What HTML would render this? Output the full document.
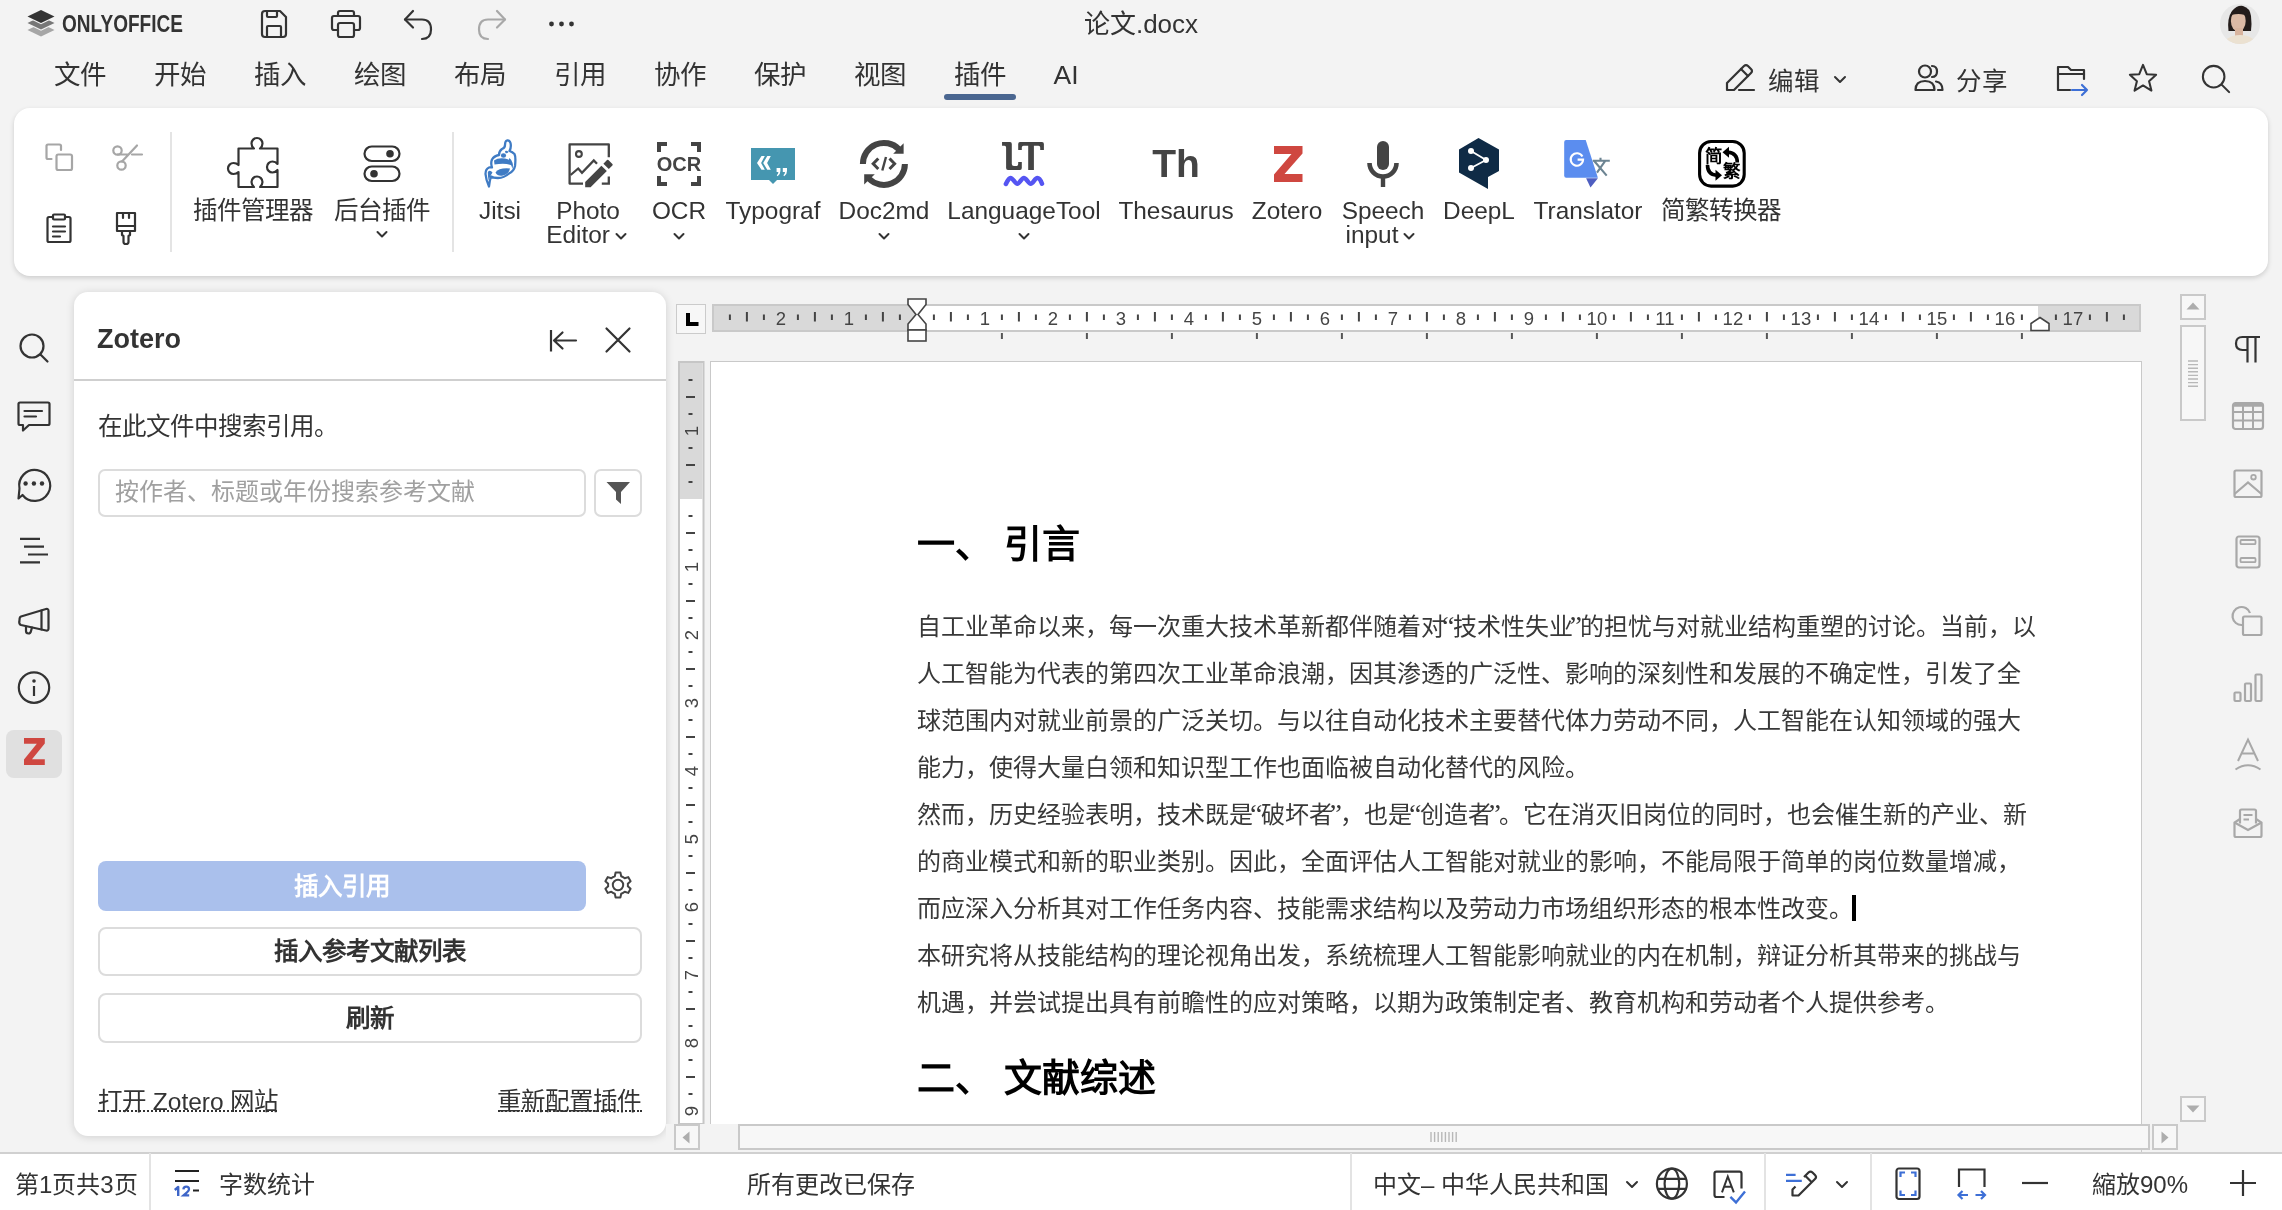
<!DOCTYPE html>
<html lang="zh-CN"><head><meta charset="utf-8">
<style>
*{box-sizing:border-box;margin:0;padding:0}
html,body{width:2282px;height:1210px;overflow:hidden}
body{position:relative;will-change:transform;background:#f3f3f3;font-family:"Liberation Sans",sans-serif;color:#333}
.a{position:absolute;white-space:nowrap}
svg{position:absolute;overflow:visible}
.st{fill:none;stroke:#333;stroke-width:2.2;stroke-linecap:round;stroke-linejoin:round}
.tab{position:absolute;top:56px;font-size:26.5px;color:#333;line-height:38px;white-space:nowrap;width:100px;text-align:center}
.lbl{position:absolute;font-size:24.4px;color:#333;line-height:24px;white-space:nowrap;text-align:center;width:200px}
.lblc{font-size:24.5px}
.chev{fill:none;stroke:#333;stroke-width:2;stroke-linecap:round;stroke-linejoin:round}
.sep{position:absolute;width:2px;background:#e4e4e4}
</style></head><body>

<!-- ============ TITLE BAR ============ -->
<svg style="left:26px;top:9px" width="30" height="29" viewBox="0 0 30 29">
  <path d="M1.5 21 L15 14.5 L28.5 21 L15 27.5 Z" fill="#a6a6a6"/>
  <path d="M1.5 14 L15 7.5 L28.5 14 L15 20.5 Z" fill="#f3f3f3" transform="translate(0,1.2)"/>
  <path d="M1.5 14 L15 7.5 L28.5 14 L15 20.5 Z" fill="#777"/>
  <path d="M1.5 7.5 L15 1 L28.5 7.5 L15 14 Z" fill="#f3f3f3" transform="translate(0,1.2)"/>
  <path d="M1.5 7.5 L15 1 L28.5 7.5 L15 14 Z" fill="#333"/>
</svg>
<div class="a" style="left:62px;top:11px;font-size:23.5px;font-weight:bold;color:#333;line-height:26px;transform:scaleX(0.81);transform-origin:0 0">ONLYOFFICE</div>

<!-- save -->
<svg style="left:259px;top:9px" width="30" height="30" viewBox="0 0 30 30">
  <path class="st" d="M3 5 Q3 2 6 2 L21 2 L27 8 L27 25 Q27 28 24 28 L6 28 Q3 28 3 25 Z"/>
  <path class="st" d="M8 2 L8 7 Q8 8 9 8 L17 8 Q18 8 18 7 L18 2"/>
  <path class="st" d="M8 28 L8 18 Q8 17 9 17 L21 17 Q22 17 22 18 L22 28"/>
</svg>
<!-- print -->
<svg style="left:330px;top:9px" width="32" height="30" viewBox="0 0 32 30">
  <path class="st" d="M8 7 L8 4 Q8 2 10 2 L22 2 Q24 2 24 4 L24 7"/>
  <path class="st" d="M8 21 L4 21 Q2 21 2 19 L2 9 Q2 7 4 7 L28 7 Q30 7 30 9 L30 19 Q30 21 28 21 L24 21"/>
  <path class="st" d="M8 16 Q8 14 10 14 L22 14 Q24 14 24 16 L24 26 Q24 28 22 28 L10 28 Q8 28 8 26 Z"/>
</svg>
<!-- undo -->
<svg style="left:403px;top:9px" width="32" height="32" viewBox="0 0 32 32">
  <path class="st" d="M10 2 L2 10.5 L10 18.5"/>
  <path class="st" d="M2 10.5 L19 10.5 Q28 10.5 28 20.5 Q28 30 19 30"/>
</svg>
<!-- redo -->
<svg style="left:475px;top:9px" width="32" height="32" viewBox="0 0 32 32">
  <path class="st" style="stroke:#a8a8a8" d="M22 2 L30 10.5 L22 18.5"/>
  <path class="st" style="stroke:#a8a8a8" d="M30 10.5 L13 10.5 Q4 10.5 4 20.5 Q4 30 13 30"/>
</svg>
<!-- more -->
<svg style="left:548px;top:20px" width="30" height="8" viewBox="0 0 30 8">
  <circle cx="3.5" cy="4" r="2.4" fill="#333"/><circle cx="13.5" cy="4" r="2.4" fill="#333"/><circle cx="23.5" cy="4" r="2.4" fill="#333"/>
</svg>

<div class="a" style="left:1041px;top:6px;width:200px;text-align:center;font-size:26px;line-height:36px;color:#333">论文.docx</div>

<!-- avatar -->
<svg style="left:2220px;top:4px" width="40" height="40" viewBox="0 0 40 40">
  <defs><clipPath id="avc"><circle cx="20" cy="20" r="20"/></clipPath></defs>
  <g clip-path="url(#avc)">
    <rect x="0" y="0" width="40" height="40" fill="#e7e7e7"/>
    <path d="M8.5 27 Q7 14 12 7 Q17 1 23 2 Q30 4 31 12 Q32 20 31 27 L27 27 L13 27 Z" fill="#231c1a"/>
    <ellipse cx="18.3" cy="17" rx="7.4" ry="10.5" fill="#dcbaa5"/>
    <path d="M11 9 Q16 4 23 5 Q28 7 28 13 Q22 8 11 11 Z" fill="#231c1a"/>
    <rect x="15" y="24" width="8" height="8" fill="#d8b49e"/>
    <ellipse cx="20" cy="42" rx="17" ry="11" fill="#ebe1d1"/>
  </g>
</svg>

<!-- ============ MENU TABS ============ -->
<div class="tab" style="left:30px">文件</div>
<div class="tab" style="left:130px">开始</div>
<div class="tab" style="left:230px">插入</div>
<div class="tab" style="left:330px">绘图</div>
<div class="tab" style="left:430px">布局</div>
<div class="tab" style="left:530px">引用</div>
<div class="tab" style="left:630px">协作</div>
<div class="tab" style="left:730px">保护</div>
<div class="tab" style="left:830px">视图</div>
<div class="tab" style="left:930px">插件</div>
<div class="tab" style="left:1016px">AI</div>
<div class="a" style="left:944px;top:94px;width:72px;height:6px;border-radius:3px;background:#4a6690"></div>

<!-- right header controls -->
<svg style="left:1725px;top:62px" width="32" height="30" viewBox="0 0 32 30">
  <path class="st" d="M2 28 L2 21 L19 4 Q21 2 23 4 L26 7 Q28 9 26 11 L9 28 Z"/>
  <path class="st" d="M16 7 L23 14"/>
  <path class="st" d="M14 28 L29 28"/>
</svg>
<div class="a" style="left:1768px;top:62px;font-size:25.5px;line-height:38px">编辑</div>
<svg style="left:1833px;top:75px" width="14" height="9" viewBox="0 0 14 9"><path class="chev" d="M2 2 L7 7 L12 2"/></svg>

<svg style="left:1914px;top:63px" width="30" height="30" viewBox="0 0 30 30">
  <circle class="st" cx="11" cy="8.5" r="6"/>
  <path class="st" d="M1.5 27 Q1.5 18 11 18 Q20.5 18 20.5 27 Z"/>
  <path class="st" d="M18 3 Q23 3 23 8.5 Q23 14 18 14"/>
  <path class="st" d="M22 18.5 Q28.5 19.5 28.5 27 L24 27"/>
</svg>
<div class="a" style="left:1956px;top:62px;font-size:25.5px;line-height:38px">分享</div>

<svg style="left:2056px;top:64px" width="34" height="32" viewBox="0 0 34 32">
  <path class="st" d="M14 26 L2 26 L2 3 L12 3 L15 6 L28 6 L28 15"/>
  <path class="st" d="M2 10 L28 10"/>
  <path class="st" style="stroke:#3d6fd6" d="M16 26 L31 26 M26 21 L31 26 L26 31"/>
</svg>
<svg style="left:2128px;top:63px" width="30" height="29" viewBox="0 0 32 31">
  <path class="st" d="M16 2 L20 12 L30 12.5 L22.5 19.5 L25 29.5 L16 24 L7 29.5 L9.5 19.5 L2 12.5 L12 12 Z"/>
</svg>
<svg style="left:2201px;top:64px" width="30" height="30" viewBox="0 0 32 32">
  <circle class="st" cx="13.5" cy="13.5" r="11.5"/>
  <path class="st" d="M22 22 L30 30"/>
</svg>
<!-- ============ TOOLBAR CARD ============ -->
<div class="a" style="left:14px;top:108px;width:2254px;height:168px;background:#fff;border-radius:16px;box-shadow:0 2px 5px rgba(0,0,0,0.16)"></div>

<!-- copy (disabled) -->
<svg style="left:44px;top:142px" width="30" height="30" viewBox="0 0 30 30">
  <path class="st" style="stroke:#a6a6a6" d="M17 8 L17 4 Q17 2.5 15.5 2.5 L4 2.5 Q2.5 2.5 2.5 4 L2.5 15.5 Q2.5 17 4 17 L7.5 17"/>
  <rect class="st" style="stroke:#a6a6a6" x="12.5" y="12.5" width="15.5" height="15.5" rx="1.8"/>
</svg>
<!-- cut (disabled) -->
<svg style="left:111px;top:141px" width="32" height="31" viewBox="0 0 32 31">
  <circle class="st" style="stroke:#a6a6a6" cx="6.5" cy="9.5" r="4.2"/>
  <circle class="st" style="stroke:#a6a6a6" cx="10.5" cy="24.5" r="4.2"/>
  <path class="st" style="stroke:#a6a6a6" d="M7 13.5 L17 13.5 M11 20.5 L26 4.5 M21 13.5 L31 13.5"/>
</svg>
<!-- paste -->
<svg style="left:45px;top:212px" width="28" height="32" viewBox="0 0 28 32">
  <path class="st" d="M8 5 L4 5 Q2.5 5 2.5 6.5 L2.5 28.5 Q2.5 30 4 30 L24 30 Q25.5 30 25.5 28.5 L25.5 6.5 Q25.5 5 24 5 L20 5"/>
  <rect class="st" x="8" y="2.5" width="12" height="5" rx="1"/>
  <path class="st" d="M8 14.5 L20 14.5 M8 19.5 L20 19.5 M8 24.5 L15 24.5"/>
</svg>
<!-- format painter -->
<svg style="left:114px;top:210px" width="24" height="36" viewBox="0 0 24 36">
  <path class="st" d="M3 3 L21 3 L21 21 L3 21 Z"/>
  <path class="st" d="M3 16 L21 16"/>
  <path class="st" d="M9 3 L9 8 M15 3 L15 8"/>
  <path class="st" d="M8 21 L8 25 L9.5 26 L9.5 32 Q9.5 34 12 34 Q14.5 34 14.5 32 L14.5 26 L16 25 L16 21"/>
</svg>
<div class="sep" style="left:170px;top:132px;height:120px"></div>

<!-- plugin manager -->
<svg style="left:226px;top:136px" width="56" height="54" viewBox="0 0 56 54">
  <path class="st" d="M12.5 12.5 L28 12.5 Q25.5 10.5 25.5 7.5 A5.3 5.3 0 1 1 36.5 7.5 Q36.5 10.5 34 12.5 L51.5 12.5 L51.5 28 Q49.5 25.5 46.5 25.5 A5.3 5.3 0 1 0 46.5 36.5 Q49.5 36.5 51.5 34 L51.5 51 L34 51 Q36.5 49 36.5 46 A5.3 5.3 0 1 0 25.5 46 Q25.5 49 28 51 L12.5 51 L12.5 36 Q10.5 38 7.5 38 A5.3 5.3 0 1 1 7.5 27 Q10.5 27 12.5 29 Z"/>
</svg>
<div class="lbl lblc" style="left:153px;top:199px">插件管理器</div>

<!-- background plugins -->
<svg style="left:362px;top:144px" width="40" height="40" viewBox="0 0 40 40">
  <rect class="st" x="2.5" y="2.5" width="35" height="14.5" rx="7.25"/>
  <rect class="st" x="2.5" y="22.5" width="35" height="14.5" rx="7.25"/>
  <circle cx="28" cy="9.75" r="3.8" fill="#333"/>
  <circle cx="12" cy="29.75" r="3.8" fill="#333"/>
</svg>
<div class="lbl lblc" style="left:282px;top:199px">后台插件</div>
<svg style="left:376px;top:230px" width="12" height="10" viewBox="0 0 12 10"><path class="chev" d="M1.5 2 L6 6.5 L10.5 2"/></svg>
<div class="sep" style="left:452px;top:132px;height:120px"></div>

<!-- Jitsi -->
<svg style="left:483px;top:139px" width="34" height="50" viewBox="0 0 34 50">
  <path d="M24 1.5 Q26.5 1 27.5 4 Q28.5 8 26.5 12 Q29.5 13 31.5 15 Q33 18 32 27 Q31 32 26 34.5 Q21 39 15 39 Q10 39 8 37.5 Q6.5 42 6 47.5 Q3 41 2.5 35 Q2.5 30 6 28.5 Q7.5 28 9 28.5 Q7.5 24 9 20.5 Q11 17 16 16 Q16 12 19 10 Q22 9 22 6 Q22 2 24 1.5 Z" fill="#fff" stroke="#3f7bc4" stroke-width="2.3" stroke-linejoin="round"/>
  <ellipse cx="20.5" cy="16.5" rx="2.6" ry="2.2" fill="#3f7bc4"/>
  <path d="M11 21.5 Q15 18.5 22 19.5 Q28 20.5 30 27 Q24 23.5 11.5 25.5 Z" fill="#3f7bc4"/>
  <path d="M12.5 33.5 Q16 28.5 27 29.5 Q26 35 20 36.5 Q14.5 37.5 12.5 33.5 Z" fill="#3f7bc4"/>
  <path d="M4.8 33 Q4.8 37.5 5.6 41.5 Q7.5 36 9.5 33.5 Q7 30.5 4.8 33 Z" fill="#3f7bc4"/>
  <path d="M26.5 19 Q31 23 29.5 30 Q28.5 25 25.5 21 Z" fill="#3f7bc4"/>
  <path d="M22 12 Q24 11 25.5 13 Q24 15 22.5 14 Z" fill="#3f7bc4"/>
</svg>
<div class="lbl" style="left:400px;top:199px">Jitsi</div>

<!-- Photo Editor -->
<svg style="left:566px;top:142px" width="50" height="48" viewBox="0 0 50 48">
  <path d="M17 41.6 L3.6 41.6 L3.6 2.4 L42.8 2.4 L42.8 15.3" fill="none" stroke="#444" stroke-width="2.3" stroke-linejoin="round"/>
  <path d="M42.8 34.6 L42.8 41.6 L35.8 41.6" fill="none" stroke="#444" stroke-width="2.3"/>
  <circle cx="12.9" cy="12" r="2.9" fill="none" stroke="#444" stroke-width="2.1"/>
  <path d="M4.6 33 L12.2 26.5 L16 30.8 L27.8 18.5 L31 21.7" fill="none" stroke="#444" stroke-width="2.3"/>
  <path d="M19.2 39.9 L35.4 23.7 L40.8 29 L24.6 45.2 L19.2 45.2 Z" fill="#444"/>
  <path d="M37.4 21.7 L42.8 27 L46.4 23.5 Q47.1 22.8 46.4 22.1 L42.4 18 Q41.7 17.3 41 18 Z" fill="#444"/>
</svg>
<div class="lbl" style="left:488px;top:199px">Photo</div>
<div class="lbl" style="left:478px;top:223px">Editor</div>
<svg style="left:615px;top:232px" width="12" height="10" viewBox="0 0 12 10"><path class="chev" d="M1.5 2 L6 6.5 L10.5 2"/></svg>

<!-- OCR -->
<svg style="left:656px;top:141px" width="46" height="46" viewBox="0 0 46 46">
  <path d="M1 1 L11 1 L11 10 L9 10 L9 10" fill="none"/>
  <path d="M1 1 h10 v4 h-6 v6 h-4 z M45 1 h-10 v4 h6 v6 h4 z M1 45 h10 v-4 h-6 v-6 h-4 z M45 45 h-10 v-4 h6 v-6 h4 z" fill="#444"/>
</svg>
<div class="a" style="left:656px;top:149px;width:46px;text-align:center;font-size:20px;font-weight:bold;color:#444;line-height:30px">OCR</div>
<div class="lbl" style="left:579px;top:199px">OCR</div>
<svg style="left:673px;top:232px" width="12" height="10" viewBox="0 0 12 10"><path class="chev" d="M1.5 2 L6 6.5 L10.5 2"/></svg>

<!-- Typograf -->
<svg style="left:751px;top:148px" width="44" height="37" viewBox="0 0 44 37">
  <path d="M0 0 H44 V32 H26 L22 36 L18 32 H0 Z" fill="#4596b0"/>
  <path d="M6 14.9 L10.5 8.1 H13.8 L10.1 14.9 L13.8 21.8 H10.5 Z M12.2 14.9 L16.3 8.1 H19.8 L16.1 14.9 L19.8 21.8 H16.3 Z" fill="#fff"/>
  <path d="M25.6 20 h3.8 v3 q0 3.5 -2.8 5.2 l-0.8 -0.9 q1.6 -1.5 1.6 -3.3 h-1.8 z M31.8 20 h4.2 v3 q0 3.5 -2.8 5.2 l-0.8 -0.9 q1.6 -1.5 1.6 -3.3 h-2.2 z" fill="#fff"/>
</svg>
<div class="lbl" style="left:673px;top:199px">Typograf</div>

<!-- Doc2md -->
<svg style="left:858px;top:138px" width="52" height="52" viewBox="0 0 52 52">
  <path fill="none" stroke="#444" stroke-width="6" d="M4.9 25.9 A21 21 0 0 1 40.75 11.05"/>
  <path d="M45.6 5.2 L45.6 15.8 L35.2 15.8 Z" fill="#444"/>
  <path fill="none" stroke="#444" stroke-width="6" d="M46.9 25.9 A21 21 0 0 1 11.05 40.75"/>
  <path d="M6.2 46.6 L6.2 36.2 L16.8 36.2 Z" fill="#444"/>
  <path fill="none" stroke="#444" stroke-width="3" d="M20.3 20.5 L15.2 25.8 L20.3 31 M31.5 20.5 L36.6 25.8 L31.5 31"/>
  <path fill="none" stroke="#444" stroke-width="2.4" d="M28 19 L24.3 32.5"/>
</svg>
<div class="lbl" style="left:784px;top:199px">Doc2md</div>
<svg style="left:878px;top:232px" width="12" height="10" viewBox="0 0 12 10"><path class="chev" d="M1.5 2 L6 6.5 L10.5 2"/></svg>

<!-- LanguageTool -->
<svg style="left:1000px;top:140px" width="46" height="48" viewBox="0 0 46 48">
  <path d="M2.05 2.1 H10 Q11.8 2.1 11.8 4 V24 Q11.8 26 14 26 H16.5 Q18.2 26 18.2 24 V22.1 H21.8 V28 Q21.8 29.9 20 29.9 H8 Q6.1 29.9 6.1 28 V7.5 Q6.1 5.8 4.5 5.8 H2.05 Z" fill="#444"/>
  <path d="M20 2.1 H42 Q43.9 2.1 43.9 4 V9.9 H40.2 V7.5 Q40.2 5.8 38.5 5.8 H33.9 V29.9 H28.2 V5.8 H23.5 Q21.8 5.8 21.8 7.5 V9.9 H18.2 V4 Q18.2 2.1 20 2.1 Z" fill="#444"/>
  <path d="M5.9 44 C8 39.5 9.5 38 10.5 38 C13 38 15 43.7 17.3 43.7 C19.6 43.7 21.5 38 23.9 38 C26.3 38 28.4 43.7 30.7 43.7 C33 43.7 35 38 37.3 38 C39.3 38 41 41 42 43.7" fill="none" stroke="#5555f2" stroke-width="4.5" stroke-linecap="round" stroke-linejoin="round"/>
</svg>
<div class="lbl" style="left:924px;top:199px">LanguageTool</div>
<svg style="left:1018px;top:232px" width="12" height="10" viewBox="0 0 12 10"><path class="chev" d="M1.5 2 L6 6.5 L10.5 2"/></svg>

<!-- Thesaurus -->
<div class="a" style="left:1126px;top:140px;width:100px;text-align:center;font-size:39px;font-weight:bold;color:#444;line-height:48px">Th</div>
<div class="lbl" style="left:1076px;top:199px">Thesaurus</div>

<!-- Zotero -->
<svg style="left:1274px;top:146px" width="29" height="36" viewBox="0 0 29 36">
  <path d="M0 0 H28.5 V7.5 L10.5 28 H28.5 V36 H0 V28.5 L17.5 8 H0 Z" fill="#cf4740"/>
</svg>
<div class="lbl" style="left:1187px;top:199px">Zotero</div>

<!-- Speech input -->
<svg style="left:1366px;top:140px" width="34" height="48" viewBox="0 0 34 48">
  <rect x="11" y="1" width="12" height="29" rx="6" fill="#444"/>
  <path d="M3.5 23 A13.5 13.5 0 0 0 30.5 23" fill="none" stroke="#444" stroke-width="4.6"/>
  <rect x="14.8" y="36" width="4.4" height="11" fill="#444"/>
</svg>
<div class="lbl" style="left:1283px;top:199px">Speech</div>
<div class="lbl" style="left:1272px;top:223px">input</div>
<svg style="left:1403px;top:232px" width="12" height="10" viewBox="0 0 12 10"><path class="chev" d="M1.5 2 L6 6.5 L10.5 2"/></svg>

<!-- DeepL -->
<svg style="left:1458px;top:137px" width="42" height="53" viewBox="0 0 42 53">
  <path d="M20.5 1 L41 12.5 L41 34 L30 40 L30 52 L1 35.5 L1 12.5 Z" fill="#0f2b46"/>
  <path d="M13 14 L28 23 L13 31" fill="none" stroke="#fff" stroke-width="1.8"/>
  <circle cx="13" cy="14" r="3" fill="#fff"/><circle cx="28" cy="23" r="3" fill="#fff"/><circle cx="13" cy="31" r="3" fill="#fff"/>
</svg>
<div class="lbl" style="left:1379px;top:199px">DeepL</div>

<!-- Translator -->
<svg style="left:1563px;top:139px" width="50" height="50" viewBox="0 0 50 50">
  <path d="M29.7 21.7 H46.8 M37.5 18.8 V21.7 M31 21.7 L43.7 36.6 M42.4 21.7 L34 33.6" fill="none" stroke="#6c8492" stroke-width="2.1"/>
  <path d="M3.2 1.1 H22.7 L34.9 38.8 H3.2 Q1.2 38.8 1.2 36.8 V3.1 Q1.2 1.1 3.2 1.1 Z" fill="#5b8def"/>
  <path d="M23.1 39.3 L34.9 39.3 L27.5 48.5 Z" fill="#4e5ec0"/>
  <path d="M19.4 17.6 A6.2 6.2 0 1 0 20.1 20.6 H14.6" fill="none" stroke="#fff" stroke-width="2.1"/>
</svg>
<div class="lbl" style="left:1488px;top:199px">Translator</div>

<!-- 简繁 -->
<svg style="left:1697px;top:139px" width="50" height="50" viewBox="0 0 50 50">
  <rect x="2.6" y="2.5" width="44.6" height="44.6" rx="11.5" fill="none" stroke="#000" stroke-width="3.1"/>
  <path d="M40.3 23.5 Q40.3 14 31 13.3" fill="none" stroke="#000" stroke-width="3.6"/>
  <path d="M25.5 13.3 L32 7.8 L32 18.8 Z" fill="#000"/>
  <path d="M10.5 26 Q10.5 35.5 19.5 36.2" fill="none" stroke="#000" stroke-width="3.6"/>
  <path d="M25 36.2 L18.5 30.7 L18.5 41.7 Z" fill="#000"/>
</svg>
<div class="a" style="left:1705px;top:145.5px;font-size:17.5px;font-weight:bold;color:#000;line-height:20px">简</div>
<div class="a" style="left:1722.5px;top:161px;font-size:17.5px;font-weight:bold;color:#000;line-height:20px">繁</div>
<div class="lbl lblc" style="left:1621px;top:199px">简繁转换器</div>
<!-- ============ LEFT SIDEBAR ============ -->
<svg style="left:18px;top:332px" width="32" height="32" viewBox="0 0 32 32">
  <circle class="st" cx="14" cy="14" r="11.5"/>
  <path class="st" d="M22.5 22.5 L29.5 29.5"/>
</svg>
<svg style="left:17px;top:401px" width="34" height="32" viewBox="0 0 34 32">
  <path class="st" d="M3 1.5 L31 1.5 Q32.5 1.5 32.5 3 L32.5 22.5 Q32.5 24 31 24 L12 24 L6 29.5 L6 24 L3 24 Q1.5 24 1.5 22.5 L1.5 3 Q1.5 1.5 3 1.5 Z"/>
  <path class="st" d="M7.5 10 L25 10 M7.5 15.5 L19 15.5"/>
</svg>
<svg style="left:17px;top:467px" width="34" height="34" viewBox="0 0 34 34">
  <path class="st" d="M5.5 28 A15.5 15.5 0 1 0 2.5 21.5 L1.5 31.5 Z" />
  <circle cx="8.6" cy="16.5" r="2.2" fill="#333"/><circle cx="16.9" cy="16.5" r="2.2" fill="#333"/><circle cx="25" cy="16.5" r="2.2" fill="#333"/>
</svg>
<svg style="left:18px;top:536px" width="32" height="30" viewBox="0 0 32 30">
  <path class="st" d="M2 2.9 L22 2.9 M6 10.7 L26 10.7 M10 18.5 L30 18.5 M2 26.3 L22 26.3" style="stroke-linecap:butt"/>
</svg>
<svg style="left:17px;top:607px" width="34" height="28" viewBox="0 0 34 28">
  <path class="st" d="M2.5 13 Q1.5 17 4 18 L29 23.5 Q31.5 24 31.5 21.5 L31.5 4 Q31.5 1.5 29 2 L4 9.5 Q2.5 10 2.5 13 Z"/>
  <path class="st" d="M24.5 3.5 L24.5 22.5"/>
  <path class="st" d="M9 19.5 L9 24 Q9 26.5 11.5 26.5 Q13.5 26.5 14 24 L15 20.5"/>
</svg>
<svg style="left:17px;top:671px" width="34" height="34" viewBox="0 0 34 34">
  <circle class="st" cx="17" cy="16.6" r="15.2"/>
  <circle cx="17" cy="10" r="1.8" fill="#333"/>
  <path class="st" d="M17 15 L17 25" style="stroke-linecap:butt"/>
</svg>
<div class="a" style="left:6px;top:730px;width:56px;height:48px;border-radius:8px;background:#e0e0e0"></div>
<svg style="left:24px;top:738px" width="21" height="27" viewBox="0 0 21 27">
  <path d="M0 0 H20.8 V5.5 L8 21.2 H20.8 V27 H0 V21.5 L12.8 5.8 H0 Z" fill="#cf4740"/>
</svg>

<!-- ============ ZOTERO PANEL ============ -->
<div class="a" style="left:74px;top:292px;width:592px;height:844px;background:#fff;border-radius:14px;box-shadow:0 1px 8px rgba(0,0,0,0.15)"></div>
<div class="a" style="left:97px;top:322px;font-size:27px;font-weight:bold;line-height:34px;color:#333">Zotero</div>
<svg style="left:548px;top:328px" width="32" height="26" viewBox="0 0 32 26">
  <path class="st" d="M3 2 L3 23.5" style="stroke-linecap:butt"/>
  <path class="st" d="M28 12.5 L6 12.5 M14.5 4.5 L6 12.5 L14.5 20.5"/>
</svg>
<svg style="left:604px;top:326px" width="28" height="28" viewBox="0 0 28 28">
  <path class="st" d="M2.5 2.5 L25.5 25.5 M25.5 2.5 L2.5 25.5"/>
</svg>
<div class="a" style="left:74px;top:379px;width:592px;height:2px;background:#cfcfcf"></div>

<div class="a" style="left:98px;top:411px;font-size:24.5px;line-height:32px;color:#333">在此文件中搜索引用。</div>
<div class="a" style="left:98px;top:469px;width:488px;height:48px;border:2px solid #dcdcdc;border-radius:7px;background:#fff"></div>
<div class="a" style="left:115px;top:476px;font-size:24px;line-height:32px;color:#a0a0a0">按作者、标题或年份搜索参考文献</div>
<div class="a" style="left:594px;top:469px;width:48px;height:48px;border:2px solid #dcdcdc;border-radius:7px;background:#fff"></div>
<svg style="left:606px;top:481px" width="25" height="24" viewBox="0 0 25 24">
  <path d="M0.5 1 L24 1 L15 11 L15 23 L10 18.5 L10 11 Z" fill="#555"/>
</svg>

<div class="a" style="left:98px;top:861px;width:488px;height:50px;border-radius:8px;background:#aac0ec"></div>
<div class="a" style="left:98px;top:871px;width:488px;text-align:center;font-size:24.5px;font-weight:bold;line-height:32px;color:#fff">插入引用</div>
<svg style="left:603px;top:870px" width="30" height="30" viewBox="0 0 30 30">
  <path class="st" style="stroke-width:2;stroke:#444" d="M12.6 2.5 L17.4 2.5 L18.2 6.2 Q20.2 7 21.7 8.3 L25.2 7.1 L27.6 11.3 L24.8 13.8 Q25.1 15 24.8 16.2 L27.6 18.7 L25.2 22.9 L21.7 21.7 Q20.2 23 18.2 23.8 L17.4 27.5 L12.6 27.5 L11.8 23.8 Q9.8 23 8.3 21.7 L4.8 22.9 L2.4 18.7 L5.2 16.2 Q4.9 15 5.2 13.8 L2.4 11.3 L4.8 7.1 L8.3 8.3 Q9.8 7 11.8 6.2 Z"/>
  <circle class="st" style="stroke-width:2;stroke:#444" cx="15" cy="15" r="5.2"/>
</svg>
<div class="a" style="left:98px;top:927px;width:544px;height:49px;border:2px solid #dcdcdc;border-radius:8px;background:#fff"></div>
<div class="a" style="left:98px;top:936px;width:544px;text-align:center;font-size:24.5px;font-weight:bold;line-height:32px;color:#333">插入参考文献列表</div>
<div class="a" style="left:98px;top:993px;width:544px;height:50px;border:2px solid #dcdcdc;border-radius:8px;background:#fff"></div>
<div class="a" style="left:98px;top:1003px;width:544px;text-align:center;font-size:24.5px;font-weight:bold;line-height:32px;color:#333">刷新</div>

<div class="a" style="left:98px;top:1086px;font-size:24.5px;line-height:32px;color:#333">打开 Zotero 网站</div>
<div class="a" style="left:98px;top:1110px;width:179px;height:0;border-top:2px dotted #333"></div>
<div class="a" style="left:497px;top:1086px;font-size:24.5px;line-height:32px;color:#333">重新配置插件</div>
<div class="a" style="left:498px;top:1110px;width:144px;height:0;border-top:2px dotted #333"></div>
<!-- ============ RULERS ============ -->
<div class="a" style="left:676px;top:304px;width:30px;height:30px;border:1.5px solid #cbcbcb;background:#f7f7f7"></div>
<svg style="left:686px;top:313px" width="13" height="13" viewBox="0 0 13 13"><path d="M0 0 H4 V9 H12.5 V13 H0 Z" fill="#000"/></svg>
<div class="a" style="left:712px;top:304px;width:1429px;height:28px;border:2px solid #c9c9c9;background:#d9d9d9"></div>
<div class="a" style="left:917px;top:306px;width:1121px;height:24px;background:#fff"></div>
<svg style="left:0px;top:0px" width="2282" height="1210" viewBox="0 0 2282 1210">
<rect x="728.9" y="314.5" width="2" height="5.5" fill="#444"/>
<rect x="745.9" y="312" width="2" height="9.5" fill="#444"/>
<rect x="762.9" y="314.5" width="2" height="5.5" fill="#444"/>
<text x="780.9" y="324.5" text-anchor="middle" font-family="Liberation Sans" font-size="18.5" fill="#444">2</text>
<rect x="796.9" y="314.5" width="2" height="5.5" fill="#444"/>
<rect x="813.9" y="312" width="2" height="9.5" fill="#444"/>
<rect x="830.9" y="314.5" width="2" height="5.5" fill="#444"/>
<text x="848.9" y="324.5" text-anchor="middle" font-family="Liberation Sans" font-size="18.5" fill="#444">1</text>
<rect x="864.9" y="314.5" width="2" height="5.5" fill="#444"/>
<rect x="881.9" y="312" width="2" height="9.5" fill="#444"/>
<rect x="898.9" y="314.5" width="2" height="5.5" fill="#444"/>
<rect x="932.9" y="314.5" width="2" height="5.5" fill="#444"/>
<rect x="949.9" y="312" width="2" height="9.5" fill="#444"/>
<rect x="966.9" y="314.5" width="2" height="5.5" fill="#444"/>
<text x="984.9" y="324.5" text-anchor="middle" font-family="Liberation Sans" font-size="18.5" fill="#444">1</text>
<rect x="1000.9" y="314.5" width="2" height="5.5" fill="#444"/>
<rect x="1017.9" y="312" width="2" height="9.5" fill="#444"/>
<rect x="1034.9" y="314.5" width="2" height="5.5" fill="#444"/>
<text x="1052.9" y="324.5" text-anchor="middle" font-family="Liberation Sans" font-size="18.5" fill="#444">2</text>
<rect x="1068.9" y="314.5" width="2" height="5.5" fill="#444"/>
<rect x="1085.9" y="312" width="2" height="9.5" fill="#444"/>
<rect x="1102.9" y="314.5" width="2" height="5.5" fill="#444"/>
<text x="1120.9" y="324.5" text-anchor="middle" font-family="Liberation Sans" font-size="18.5" fill="#444">3</text>
<rect x="1136.9" y="314.5" width="2" height="5.5" fill="#444"/>
<rect x="1153.9" y="312" width="2" height="9.5" fill="#444"/>
<rect x="1170.9" y="314.5" width="2" height="5.5" fill="#444"/>
<text x="1188.9" y="324.5" text-anchor="middle" font-family="Liberation Sans" font-size="18.5" fill="#444">4</text>
<rect x="1204.9" y="314.5" width="2" height="5.5" fill="#444"/>
<rect x="1221.9" y="312" width="2" height="9.5" fill="#444"/>
<rect x="1238.9" y="314.5" width="2" height="5.5" fill="#444"/>
<text x="1256.9" y="324.5" text-anchor="middle" font-family="Liberation Sans" font-size="18.5" fill="#444">5</text>
<rect x="1272.9" y="314.5" width="2" height="5.5" fill="#444"/>
<rect x="1289.9" y="312" width="2" height="9.5" fill="#444"/>
<rect x="1306.9" y="314.5" width="2" height="5.5" fill="#444"/>
<text x="1324.9" y="324.5" text-anchor="middle" font-family="Liberation Sans" font-size="18.5" fill="#444">6</text>
<rect x="1340.9" y="314.5" width="2" height="5.5" fill="#444"/>
<rect x="1357.9" y="312" width="2" height="9.5" fill="#444"/>
<rect x="1374.9" y="314.5" width="2" height="5.5" fill="#444"/>
<text x="1392.9" y="324.5" text-anchor="middle" font-family="Liberation Sans" font-size="18.5" fill="#444">7</text>
<rect x="1408.9" y="314.5" width="2" height="5.5" fill="#444"/>
<rect x="1425.9" y="312" width="2" height="9.5" fill="#444"/>
<rect x="1442.9" y="314.5" width="2" height="5.5" fill="#444"/>
<text x="1460.9" y="324.5" text-anchor="middle" font-family="Liberation Sans" font-size="18.5" fill="#444">8</text>
<rect x="1476.9" y="314.5" width="2" height="5.5" fill="#444"/>
<rect x="1493.9" y="312" width="2" height="9.5" fill="#444"/>
<rect x="1510.9" y="314.5" width="2" height="5.5" fill="#444"/>
<text x="1528.9" y="324.5" text-anchor="middle" font-family="Liberation Sans" font-size="18.5" fill="#444">9</text>
<rect x="1544.9" y="314.5" width="2" height="5.5" fill="#444"/>
<rect x="1561.9" y="312" width="2" height="9.5" fill="#444"/>
<rect x="1578.9" y="314.5" width="2" height="5.5" fill="#444"/>
<text x="1596.9" y="324.5" text-anchor="middle" font-family="Liberation Sans" font-size="18.5" fill="#444">10</text>
<rect x="1612.9" y="314.5" width="2" height="5.5" fill="#444"/>
<rect x="1629.9" y="312" width="2" height="9.5" fill="#444"/>
<rect x="1646.9" y="314.5" width="2" height="5.5" fill="#444"/>
<text x="1664.9" y="324.5" text-anchor="middle" font-family="Liberation Sans" font-size="18.5" fill="#444">11</text>
<rect x="1680.9" y="314.5" width="2" height="5.5" fill="#444"/>
<rect x="1697.9" y="312" width="2" height="9.5" fill="#444"/>
<rect x="1714.9" y="314.5" width="2" height="5.5" fill="#444"/>
<text x="1732.9" y="324.5" text-anchor="middle" font-family="Liberation Sans" font-size="18.5" fill="#444">12</text>
<rect x="1748.9" y="314.5" width="2" height="5.5" fill="#444"/>
<rect x="1765.9" y="312" width="2" height="9.5" fill="#444"/>
<rect x="1782.9" y="314.5" width="2" height="5.5" fill="#444"/>
<text x="1800.9" y="324.5" text-anchor="middle" font-family="Liberation Sans" font-size="18.5" fill="#444">13</text>
<rect x="1816.9" y="314.5" width="2" height="5.5" fill="#444"/>
<rect x="1833.9" y="312" width="2" height="9.5" fill="#444"/>
<rect x="1850.9" y="314.5" width="2" height="5.5" fill="#444"/>
<text x="1868.9" y="324.5" text-anchor="middle" font-family="Liberation Sans" font-size="18.5" fill="#444">14</text>
<rect x="1884.9" y="314.5" width="2" height="5.5" fill="#444"/>
<rect x="1901.9" y="312" width="2" height="9.5" fill="#444"/>
<rect x="1918.9" y="314.5" width="2" height="5.5" fill="#444"/>
<text x="1936.9" y="324.5" text-anchor="middle" font-family="Liberation Sans" font-size="18.5" fill="#444">15</text>
<rect x="1952.9" y="314.5" width="2" height="5.5" fill="#444"/>
<rect x="1969.9" y="312" width="2" height="9.5" fill="#444"/>
<rect x="1986.9" y="314.5" width="2" height="5.5" fill="#444"/>
<text x="2004.9" y="324.5" text-anchor="middle" font-family="Liberation Sans" font-size="18.5" fill="#444">16</text>
<rect x="2020.9" y="314.5" width="2" height="5.5" fill="#444"/>
<rect x="2054.9" y="314.5" width="2" height="5.5" fill="#444"/>
<text x="2072.9" y="324.5" text-anchor="middle" font-family="Liberation Sans" font-size="18.5" fill="#444">17</text>
<rect x="2088.9" y="314.5" width="2" height="5.5" fill="#444"/>
<rect x="2105.9" y="312" width="2" height="9.5" fill="#444"/>
<rect x="2122.9" y="314.5" width="2" height="5.5" fill="#444"/>
<rect x="1000.9" y="333" width="2" height="6" fill="#555"/>
<rect x="1085.9" y="333" width="2" height="6" fill="#555"/>
<rect x="1170.9" y="333" width="2" height="6" fill="#555"/>
<rect x="1255.9" y="333" width="2" height="6" fill="#555"/>
<rect x="1340.9" y="333" width="2" height="6" fill="#555"/>
<rect x="1425.9" y="333" width="2" height="6" fill="#555"/>
<rect x="1510.9" y="333" width="2" height="6" fill="#555"/>
<rect x="1595.9" y="333" width="2" height="6" fill="#555"/>
<rect x="1680.9" y="333" width="2" height="6" fill="#555"/>
<rect x="1765.9" y="333" width="2" height="6" fill="#555"/>
<rect x="1850.9" y="333" width="2" height="6" fill="#555"/>
<rect x="1935.9" y="333" width="2" height="6" fill="#555"/>
<rect x="2020.9" y="333" width="2" height="6" fill="#555"/>
<path d="M908 299 L926 299 L926 304.5 L918 314.5 L926 324 L926 330 L908 330 L908 324 L916 314.5 L908 304.5 Z" fill="#fff" stroke="#444" stroke-width="1.6"/>
<rect x="908" y="330" width="18" height="11" fill="#fff" stroke="#444" stroke-width="1.6"/>
<path d="M2031 330.5 L2031 323.5 L2040 317.5 L2049 323.5 L2049 330.5 Z" fill="#fff" stroke="#444" stroke-width="1.6"/>
<rect x="679" y="362" width="24.5" height="762" fill="#fff" stroke="#c6c6c6" stroke-width="2"/>
<rect x="680" y="363" width="22.5" height="136" fill="#d9d9d9"/>
<rect x="688.5" y="379.0" width="4" height="2" fill="#444"/>
<rect x="686" y="396.0" width="9" height="2" fill="#444"/>
<rect x="688.5" y="413.0" width="4" height="2" fill="#444"/>
<text x="0" y="0" transform="translate(697.5,431.0) rotate(-90)" text-anchor="middle" font-family="Liberation Sans" font-size="18.5" fill="#444">1</text>
<rect x="688.5" y="447.0" width="4" height="2" fill="#444"/>
<rect x="686" y="464.0" width="9" height="2" fill="#444"/>
<rect x="688.5" y="481.0" width="4" height="2" fill="#444"/>
<rect x="688.5" y="515.0" width="4" height="2" fill="#444"/>
<rect x="686" y="532.0" width="9" height="2" fill="#444"/>
<rect x="688.5" y="549.0" width="4" height="2" fill="#444"/>
<text x="0" y="0" transform="translate(697.5,567.0) rotate(-90)" text-anchor="middle" font-family="Liberation Sans" font-size="18.5" fill="#444">1</text>
<rect x="688.5" y="583.0" width="4" height="2" fill="#444"/>
<rect x="686" y="600.0" width="9" height="2" fill="#444"/>
<rect x="688.5" y="617.0" width="4" height="2" fill="#444"/>
<text x="0" y="0" transform="translate(697.5,635.0) rotate(-90)" text-anchor="middle" font-family="Liberation Sans" font-size="18.5" fill="#444">2</text>
<rect x="688.5" y="651.0" width="4" height="2" fill="#444"/>
<rect x="686" y="668.0" width="9" height="2" fill="#444"/>
<rect x="688.5" y="685.0" width="4" height="2" fill="#444"/>
<text x="0" y="0" transform="translate(697.5,703.0) rotate(-90)" text-anchor="middle" font-family="Liberation Sans" font-size="18.5" fill="#444">3</text>
<rect x="688.5" y="719.0" width="4" height="2" fill="#444"/>
<rect x="686" y="736.0" width="9" height="2" fill="#444"/>
<rect x="688.5" y="753.0" width="4" height="2" fill="#444"/>
<text x="0" y="0" transform="translate(697.5,771.0) rotate(-90)" text-anchor="middle" font-family="Liberation Sans" font-size="18.5" fill="#444">4</text>
<rect x="688.5" y="787.0" width="4" height="2" fill="#444"/>
<rect x="686" y="804.0" width="9" height="2" fill="#444"/>
<rect x="688.5" y="821.0" width="4" height="2" fill="#444"/>
<text x="0" y="0" transform="translate(697.5,839.0) rotate(-90)" text-anchor="middle" font-family="Liberation Sans" font-size="18.5" fill="#444">5</text>
<rect x="688.5" y="855.0" width="4" height="2" fill="#444"/>
<rect x="686" y="872.0" width="9" height="2" fill="#444"/>
<rect x="688.5" y="889.0" width="4" height="2" fill="#444"/>
<text x="0" y="0" transform="translate(697.5,907.0) rotate(-90)" text-anchor="middle" font-family="Liberation Sans" font-size="18.5" fill="#444">6</text>
<rect x="688.5" y="923.0" width="4" height="2" fill="#444"/>
<rect x="686" y="940.0" width="9" height="2" fill="#444"/>
<rect x="688.5" y="957.0" width="4" height="2" fill="#444"/>
<text x="0" y="0" transform="translate(697.5,975.0) rotate(-90)" text-anchor="middle" font-family="Liberation Sans" font-size="18.5" fill="#444">7</text>
<rect x="688.5" y="991.0" width="4" height="2" fill="#444"/>
<rect x="686" y="1008.0" width="9" height="2" fill="#444"/>
<rect x="688.5" y="1025.0" width="4" height="2" fill="#444"/>
<text x="0" y="0" transform="translate(697.5,1043.0) rotate(-90)" text-anchor="middle" font-family="Liberation Sans" font-size="18.5" fill="#444">8</text>
<rect x="688.5" y="1059.0" width="4" height="2" fill="#444"/>
<rect x="686" y="1076.0" width="9" height="2" fill="#444"/>
<rect x="688.5" y="1093.0" width="4" height="2" fill="#444"/>
<text x="0" y="0" transform="translate(697.5,1111.0) rotate(-90)" text-anchor="middle" font-family="Liberation Sans" font-size="18.5" fill="#444">9</text>
</svg>
<!-- page -->
<div class="a" style="left:710px;top:361px;width:1432px;height:900px;border:1.5px solid #c9c9c9;background:#fff"></div>
<!-- ============ DOCUMENT TEXT ============ -->
<style>
.dl{position:absolute;left:917px;font-family:"Liberation Serif",serif;font-size:24px;line-height:30px;color:#383838;white-space:nowrap}
.q{display:inline-block;width:7.5px;overflow:visible;font-size:28px;line-height:20px;text-indent:-3px}
.h{position:absolute;left:917px;font-family:"Liberation Serif",serif;font-size:38px;font-weight:bold;line-height:44px;color:#000;white-space:nowrap}
</style>
<div class="h" style="top:522px">一、<span style="display:inline-block;width:11px"></span>引言</div>
<div class="dl" style="top:612px">自工业革命以来，每一次重大技术革新都伴随着对<span class="q">“</span>技术性失业<span class="q">”</span>的担忧与对就业结构重塑的讨论。当前，以</div>
<div class="dl" style="top:659px">人工智能为代表的第四次工业革命浪潮，因其渗透的广泛性、影响的深刻性和发展的不确定性，引发了全</div>
<div class="dl" style="top:706px">球范围内对就业前景的广泛关切。与以往自动化技术主要替代体力劳动不同，人工智能在认知领域的强大</div>
<div class="dl" style="top:753px">能力，使得大量白领和知识型工作也面临被自动化替代的风险。</div>
<div class="dl" style="top:800px">然而，历史经验表明，技术既是<span class="q">“</span>破坏者<span class="q">”</span>，也是<span class="q">“</span>创造者<span class="q">”</span>。它在消灭旧岗位的同时，也会催生新的产业、新</div>
<div class="dl" style="top:847px">的商业模式和新的职业类别。因此，全面评估人工智能对就业的影响，不能局限于简单的岗位数量增减，</div>
<div class="dl" style="top:894px">而应深入分析其对工作任务内容、技能需求结构以及劳动力市场组织形态的根本性改变。</div>
<div class="a" style="left:1852px;top:895px;width:4px;height:26px;background:#000"></div>
<div class="dl" style="top:941px">本研究将从技能结构的理论视角出发，系统梳理人工智能影响就业的内在机制，辩证分析其带来的挑战与</div>
<div class="dl" style="top:988px">机遇，并尝试提出具有前瞻性的应对策略，以期为政策制定者、教育机构和劳动者个人提供参考。</div>
<div class="h" style="top:1056px">二、<span style="display:inline-block;width:11px"></span>文献综述</div>

<!-- ============ RIGHT: SCROLLBAR + ICONS ============ -->
<div class="a" style="left:2143px;top:292px;width:139px;height:861px;background:#f3f3f3"></div>
<div class="a" style="left:2180px;top:294px;width:26px;height:26px;border:2px solid #c9c9c9;background:#f7f7f7"></div>
<svg style="left:2186px;top:302px" width="14" height="8" viewBox="0 0 14 8"><path d="M0.5 7.5 L7 0.5 L13.5 7.5 Z" fill="#adadad"/></svg>
<div class="a" style="left:2180px;top:325px;width:26px;height:96px;border:2px solid #c9c9c9;background:#f7f7f7"></div>
<svg style="left:2187px;top:360px" width="12" height="28" viewBox="0 0 12 28">
  <path d="M1 1 H11 M1 4.6 H11 M1 8.2 H11 M1 11.8 H11 M1 15.4 H11 M1 19 H11 M1 22.6 H11 M1 26.2 H11" stroke="#b8b8b8" stroke-width="1.4"/>
</svg>
<div class="a" style="left:2180px;top:1096px;width:26px;height:26px;border:2px solid #c9c9c9;background:#f7f7f7"></div>
<svg style="left:2186px;top:1105px" width="14" height="8" viewBox="0 0 14 8"><path d="M0.5 0.5 L7 7.5 L13.5 0.5 Z" fill="#adadad"/></svg>

<svg style="left:2234px;top:334px" width="28" height="30" viewBox="0 0 28 30">
  <path d="M13.5 16 L8.5 16 Q2 16 2 9.5 Q2 3 8.5 3 L26 3" fill="none" stroke="#333" stroke-width="2.2"/>
  <path d="M13.5 3 V28.5 M21.5 3 V28.5" fill="none" stroke="#333" stroke-width="2.2"/>
</svg>
<svg style="left:2231px;top:401px" width="34" height="30" viewBox="0 0 34 30">
  <rect x="2" y="2" width="30" height="26" rx="2.5" fill="none" stroke="#a8a8a8" stroke-width="2.2"/>
  <path d="M2 4 H32" stroke="#a8a8a8" stroke-width="3.5"/>
  <path d="M2 11 H32 M2 19.5 H32 M12 3 V28 M22 3 V28" stroke="#a8a8a8" stroke-width="2"/>
</svg>
<svg style="left:2233px;top:469px" width="30" height="30" viewBox="0 0 30 30">
  <rect x="1.5" y="1.5" width="27" height="26.5" rx="1.5" fill="none" stroke="#a8a8a8" stroke-width="2.2"/>
  <path d="M1.5 25 L15 13.5 L28.5 25" fill="none" stroke="#a8a8a8" stroke-width="2.2"/>
  <circle cx="20.5" cy="8.2" r="2.3" fill="none" stroke="#a8a8a8" stroke-width="1.8"/>
</svg>
<svg style="left:2235px;top:535px" width="26" height="34" viewBox="0 0 26 34">
  <rect x="1.5" y="1.5" width="23" height="31" rx="2.5" fill="none" stroke="#a8a8a8" stroke-width="2.2"/>
  <rect x="5.5" y="5" width="15" height="4.2" rx="1" fill="none" stroke="#a8a8a8" stroke-width="1.8"/>
  <rect x="5.5" y="23" width="15" height="4.2" rx="1" fill="none" stroke="#a8a8a8" stroke-width="1.8"/>
</svg>
<svg style="left:2231px;top:605px" width="33" height="32" viewBox="0 0 33 32">
  <path d="M11 20 A9 9 0 1 1 19 8" fill="none" stroke="#a8a8a8" stroke-width="2.2"/>
  <rect x="12" y="11.5" width="18.5" height="18.5" rx="1.5" fill="none" stroke="#a8a8a8" stroke-width="2.2"/>
</svg>
<svg style="left:2233px;top:673px" width="30" height="30" viewBox="0 0 30 30">
  <rect x="1.5" y="19.5" width="6" height="8.5" rx="1" fill="none" stroke="#a8a8a8" stroke-width="2.2"/>
  <rect x="12" y="10.5" width="6" height="17.5" rx="1" fill="none" stroke="#a8a8a8" stroke-width="2.2"/>
  <rect x="22.5" y="1.5" width="6" height="26.5" rx="1" fill="none" stroke="#a8a8a8" stroke-width="2.2"/>
</svg>
<svg style="left:2234px;top:738px" width="28" height="34" viewBox="0 0 28 34">
  <path d="M4 23 L14 1.5 L24 23 M7.5 15.5 L20.5 15.5" fill="none" stroke="#a8a8a8" stroke-width="2"/>
  <path d="M1.5 31.5 Q14 23 26.5 31.5" fill="none" stroke="#a8a8a8" stroke-width="2"/>
</svg>
<svg style="left:2233px;top:808px" width="30" height="31" viewBox="0 0 30 31">
  <path d="M7 11 L1.5 14.5 L1.5 27.5 Q1.5 29 3 29 L27 29 Q28.5 29 28.5 27.5 L28.5 14.5 L23 11" fill="none" stroke="#a8a8a8" stroke-width="2.2"/>
  <path d="M7 15.5 L7 3 Q7 1.5 8.5 1.5 L21.5 1.5 Q23 1.5 23 3 L23 15.5" fill="none" stroke="#a8a8a8" stroke-width="2.2"/>
  <path d="M1.5 14.5 L15 22 L28.5 14.5" fill="none" stroke="#a8a8a8" stroke-width="2.2"/>
  <path d="M10.5 7 H19.5 M10.5 11.5 H16" stroke="#a8a8a8" stroke-width="2"/>
</svg>

<!-- ============ H SCROLLBAR ============ -->
<div class="a" style="left:666px;top:1124px;width:1475px;height:29px;background:#f3f3f3"></div>
<div class="a" style="left:674px;top:1124px;width:26px;height:26px;border:2px solid #c9c9c9;background:#f7f7f7"></div>
<svg style="left:682px;top:1131px" width="8" height="13" viewBox="0 0 8 13"><path d="M7.5 0.5 L0.5 6.5 L7.5 12.5 Z" fill="#adadad"/></svg>
<div class="a" style="left:738px;top:1124px;width:1412px;height:26px;border:2px solid #c9c9c9;background:#f7f7f7"></div>
<svg style="left:1430px;top:1131px" width="30" height="12" viewBox="0 0 30 12">
  <path d="M1 1 V11 M4.6 1 V11 M8.2 1 V11 M11.8 1 V11 M15.4 1 V11 M19 1 V11 M22.6 1 V11 M26.2 1 V11" stroke="#b8b8b8" stroke-width="1.4"/>
</svg>
<div class="a" style="left:2152px;top:1124px;width:26px;height:26px;border:2px solid #c9c9c9;background:#f7f7f7"></div>
<svg style="left:2161px;top:1131px" width="8" height="13" viewBox="0 0 8 13"><path d="M0.5 0.5 L7.5 6.5 L0.5 12.5 Z" fill="#adadad"/></svg>

<!-- ============ STATUS BAR ============ -->
<div class="a" style="left:0;top:1152px;width:2282px;height:58px;background:#fff;border-top:2px solid #d0d0d0"></div>
<div class="a" style="left:15px;top:1169px;font-size:24px;line-height:32px;color:#333">第1页共3页</div>
<div class="a" style="left:149px;top:1153px;width:2px;height:57px;background:#e3e3e3"></div>
<svg style="left:174px;top:1169px" width="28" height="30" viewBox="0 0 28 30">
  <path d="M1 2 H25 M1 12 H25 M19 21.5 H25" stroke="#222" stroke-width="2"/>
  <path d="M0.8 21 L4.2 18 V27" fill="none" stroke="#3d65c8" stroke-width="2.4" stroke-linejoin="round"/>
  <path d="M9.4 20.3 Q9.6 17.6 12.2 17.6 Q15 17.6 15 20.2 Q15 21.8 13 23.4 L9.6 26.3 H15.2" fill="none" stroke="#3d65c8" stroke-width="2.3"/>
</svg>
<div class="a" style="left:219px;top:1169px;font-size:24px;line-height:32px;color:#333">字数统计</div>
<div class="a" style="left:747px;top:1169px;font-size:24px;line-height:32px;color:#333">所有更改已保存</div>
<div class="a" style="left:1350px;top:1153px;width:2px;height:57px;background:#e3e3e3"></div>
<div class="a" style="left:1373px;top:1169px;font-size:24px;line-height:32px;color:#333">中文– 中华人民共和国</div>
<svg style="left:1625px;top:1180px" width="14" height="10" viewBox="0 0 14 10"><path class="chev" d="M2 2 L7 7 L12 2"/></svg>
<svg style="left:1655px;top:1167px" width="34" height="34" viewBox="0 0 34 34">
  <circle cx="16.9" cy="16.7" r="15" fill="none" stroke="#333" stroke-width="2.2"/>
  <ellipse cx="16.9" cy="16.7" rx="7.3" ry="15" fill="none" stroke="#333" stroke-width="2.2"/>
  <path d="M2.5 11.9 H31.3 M2.5 21.8 H31.3" stroke="#333" stroke-width="2.2" fill="none"/>
</svg>
<svg style="left:1713px;top:1170px" width="36" height="35" viewBox="0 0 36 35">
  <path d="M11.5 27 L3.5 27 Q1.5 27 1.5 25 L1.5 3.6 Q1.5 1.6 3.5 1.6 L26.5 1.6 Q28.5 1.6 28.5 3.6 L28.5 18.6" fill="none" stroke="#333" stroke-width="2.2"/>
  <path d="M9 22.3 L14.8 6.5 L20.8 22.3 M11 16.8 L18.8 16.8" fill="none" stroke="#333" stroke-width="2"/>
  <path d="M17.4 26.9 L23 32.4 L32 21.4" fill="none" stroke="#3d6fd6" stroke-width="2.4"/>
</svg>
<div class="a" style="left:1764px;top:1153px;width:2px;height:57px;background:#e3e3e3"></div>
<svg style="left:1784px;top:1169px" width="36" height="30" viewBox="0 0 36 30">
  <path d="M2 5.8 H11.6 M2 11.8 H17.8" stroke="#3d6fd6" stroke-width="2.3"/>
  <path d="M11.5 17.5 L8.5 20.5 V26.5 H14.5 L31 10 Q33 8 31 6 L28.5 3.5 Q26.5 1.5 24.5 3.5 L20 8" fill="none" stroke="#333" stroke-width="2.2" stroke-linejoin="round"/>
  <path d="M21.5 7 L27.5 13" fill="none" stroke="#333" stroke-width="2.2"/>
</svg>
<svg style="left:1835px;top:1180px" width="14" height="10" viewBox="0 0 14 10"><path class="chev" d="M2 2 L7 7 L12 2"/></svg>
<div class="a" style="left:1870px;top:1153px;width:2px;height:57px;background:#e3e3e3"></div>
<svg style="left:1895px;top:1167px" width="26" height="34" viewBox="0 0 26 34">
  <rect x="1.5" y="1.5" width="23" height="30.5" rx="2.5" fill="none" stroke="#333" stroke-width="2.2"/>
  <path d="M5.5 10 V5.5 H10 M16 5.5 H20.5 V10 M5.5 23.5 V28 H10 M16 28 H20.5 V23.5" fill="none" stroke="#3d6fd6" stroke-width="2.2"/>
</svg>
<svg style="left:1956px;top:1167px" width="32" height="34" viewBox="0 0 32 34">
  <path d="M3 20 V2.5 H28.5 V20" fill="none" stroke="#333" stroke-width="2.2"/>
  <path d="M2.5 28 H12 M6.5 24 L2.5 28 L6.5 32 M19.5 28 H29 M25 24 L29 28 L25 32" fill="none" stroke="#3d6fd6" stroke-width="2.2"/>
</svg>
<svg style="left:2021px;top:1181px" width="28" height="4" viewBox="0 0 28 4"><path d="M1 2 H27" stroke="#333" stroke-width="2.2"/></svg>
<div class="a" style="left:2092px;top:1169px;font-size:24px;line-height:32px;color:#333">縮放90%</div>
<svg style="left:2229px;top:1169px" width="28" height="28" viewBox="0 0 28 28"><path d="M1 14 H27 M14 1 V27" stroke="#333" stroke-width="2.2"/></svg>

</body></html>
